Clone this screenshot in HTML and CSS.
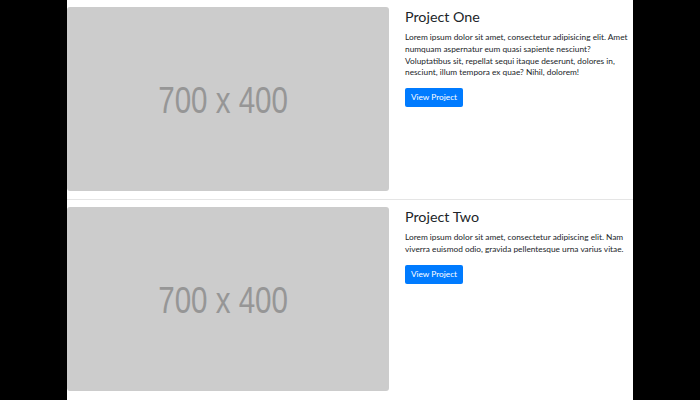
FILE: index.html
```html
<!DOCTYPE html>
<html>
<head>
<meta charset="utf-8">
<link rel="stylesheet" href="styles.css">
</head>
<body>
<div class="container">
  <div class="project">
    <div class="thumb"><span class="thumb-label">700 x 400</span></div>
    <div class="info">
      <h3 class="title">Project One</h3>
      <p class="desc">Lorem ipsum dolor sit amet, consectetur adipisicing elit. Amet numquam aspernatur eum quasi sapiente nesciunt? Voluptatibus sit, repellat sequi itaque deserunt, dolores in, nesciunt, illum tempora ex quae? Nihil, dolorem!</p>
      <a class="btn" href="#">View Project</a>
    </div>
  </div>
  <hr class="sep">
  <div class="project">
    <div class="thumb"><span class="thumb-label">700 x 400</span></div>
    <div class="info">
      <h3 class="title">Project Two</h3>
      <p class="desc">Lorem ipsum dolor sit amet, consectetur adipiscing elit. Nam viverra euismod odio, gravida pellentesque urna varius vitae.</p>
      <a class="btn" href="#">View Project</a>
    </div>
  </div>
</div>
</body>
</html>
```
FILE: styles.css
```css
html, body {
  margin: 0;
  padding: 0;
  background: #000;
  height: 400px;
  overflow: hidden;
}
.container {
  width: 566px;
  margin: 0 auto;
  background: #fff;
  min-height: 400px;
  padding-top: 7px;
  box-sizing: border-box;
  font-family: "Lato", "Noto Sans", sans-serif;
  color: #212529;
}
.project {
  display: grid;
  grid-template-columns: 322px 1fr;
  column-gap: 16px;
}
.thumb {
  height: 184px;
  background: #ccc;
  border-radius: 3px;
  display: flex;
  align-items: center;
  justify-content: center;
}
.thumb-label {
  font-family: "Liberation Sans", Arial, sans-serif;
  font-size: 36px;
  color: #969696;
  display: inline-block;
  transform: translate(-5px, 2px) scaleX(0.82);
}
.info {
  padding-top: 1px;
  padding-right: 2px;
}
.title {
  margin: 0 0 6px;
  font-size: 14.3px;
  font-weight: 400;
  line-height: 18px;
}
.desc {
  margin: 0 0 5px;
  font-size: 8.3px;
  line-height: 11.8px;
}
.btn {
  display: inline-block;
  background: #007bff;
  color: #fff;
  text-decoration: none;
  font-size: 8.3px;
  line-height: 12px;
  padding: 3px 0 4px;
  width: 58px;
  text-align: center;
  border-radius: 2px;
}
.sep {
  margin: 8px 0 7px;
  border: 0;
  border-top: 1px solid rgba(0,0,0,0.1);
}
```
